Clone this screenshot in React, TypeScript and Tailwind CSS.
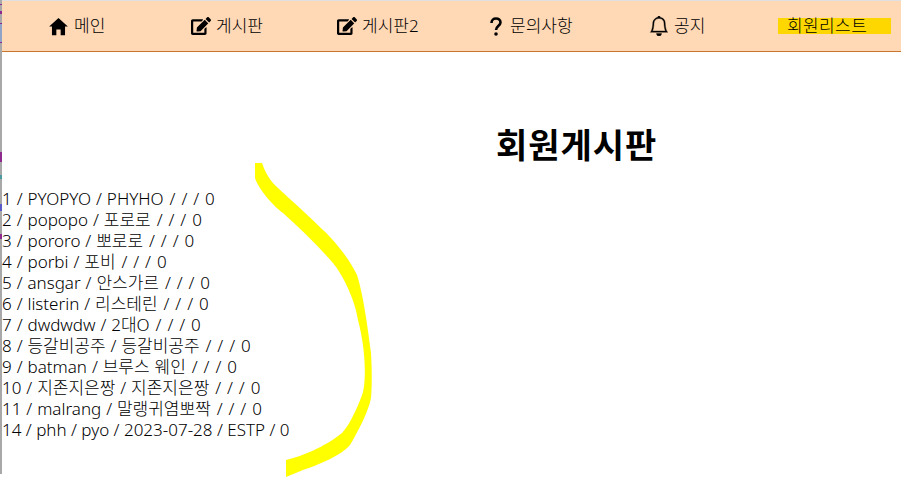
import { ReactNode } from 'react';
import { BsBell } from 'react-icons/bs';
import { FaEdit } from 'react-icons/fa';
import { IoMdHome } from 'react-icons/io';

const questionIcon = (
  <svg className="h-[19px] w-[12px] shrink-0" viewBox="0 0 12 19" fill="none">
    <path d="M1.5 6 C1.5 3 3.5 1.5 6 1.5 C8.5 1.5 10.5 3 10.5 5.5 C10.5 8.5 6 9 6 13" stroke="currentColor" strokeWidth="2.6" />
    <circle cx="6" cy="17" r="1.8" fill="currentColor" />
  </svg>
);

const menus: { label: string; icon: ReactNode; width: string; gap: string }[] = [
  { label: '메인', icon: <IoMdHome className="h-[23px] w-[23px] shrink-0 -mx-[2px]" />, width: 'w-[142px]', gap: 'gap-[6px]' },
  { label: '게시판', icon: <FaEdit className="h-[18px] w-[20px] shrink-0" />, width: 'w-[146px]', gap: 'gap-[5px]' },
  { label: '게시판2', icon: <FaEdit className="h-[18px] w-[20px] shrink-0" />, width: 'w-[153px]', gap: 'gap-[5px]' },
  { label: '문의사항', icon: questionIcon, width: 'w-[159px]', gap: 'gap-[8px]' },
  { label: '공지', icon: <BsBell className="h-[20px] w-[20px] shrink-0" stroke="currentColor" strokeWidth="0.3" />, width: 'w-[129px]', gap: 'gap-[5px]' },
];

// rows with empty birth/mbti columns render the trailing slashes a bit wider
const members = [
  { head: '1 / PYOPYO / PHYHO', tail: ' / / / 0' },
  { head: '2 / popopo / 포로로', tail: ' / / / 0' },
  { head: '3 / pororo / 뽀로로', tail: ' / / / 0' },
  { head: '4 / porbi / 포비', tail: ' / / / 0' },
  { head: '5 / ansgar / 안스가르', tail: ' / / / 0' },
  { head: '6 / listerin / 리스테린', tail: ' / / / 0' },
  { head: '7 / dwdwdw / 2대O', tail: ' / / / 0' },
  { head: '8 / 등갈비공주 / 등갈비공주', tail: ' / / / 0' },
  { head: '9 / batman / 브루스 웨인', tail: ' / / / 0' },
  { head: '10 / 지존지은짱 / 지존지은짱', tail: ' / / / 0' },
  { head: '11 / malrang / 말랭귀염뽀짝', tail: ' / / / 0' },
  { head: '14 / phh / pyo / 2023-07-28 / ESTP / 0', tail: '' },
];

export default function App() {
  return (
    <div className="relative h-[477px] w-[901px] overflow-hidden bg-white font-['Noto_Sans','Noto_Sans_CJK_KR',sans-serif] text-[17px] text-black">
      <div className="h-[1px] bg-[#e0e0e0]" />
      <nav className="ml-[2px] flex h-[51px] items-center border-b border-[#c87530] bg-[#ffd8b5] pl-[47px]">
        {menus.map((menu) => (
          <a key={menu.label} className={`flex items-center ${menu.gap} ${menu.width}`}>
            {menu.icon}
            <span className="font-light">{menu.label}</span>
          </a>
        ))}
        <a className="h-[16px] w-[113px] bg-[#ffd700] pl-[9px] leading-[16px] font-light tracking-[0.4px]">회원리스트</a>
      </nav>
      <h1 className="ml-[496px] mt-[70px] text-[34px] leading-[46px] font-bold tracking-[1px]">회원게시판</h1>
      <ul className="mt-[20px] pl-[2px] leading-[21px] font-light">
        {members.map((member) => (
          <li key={member.head} className={member.tail ? '[word-spacing:0.5px]' : ''}>
            {member.head}
            <span className="[word-spacing:1.5px]">{member.tail}</span>
          </li>
        ))}
      </ul>
      {/* marker stroke drawn over the list */}
      <svg className="absolute left-0 top-0" width="901" height="477" fill="#ffff00">
        <path d="M255 163 L262 163 C265 172 270 181 278 188 C290 199 310 217 323 230 C335 241 350 260 357 275 C362 290 367 320 371 353 C372 370 372 385 371 398 C369 410 358 432 350 445 C342 455 318 465 303 470 L286 477 L286 460 C300 457 325 447 342 433 C350 425 360 402 363 392 C366 380 366 350 358 320 C355 300 343 275 333 263 C322 250 300 228 283 213 C272 205 258 188 255 178 Z" />
      </svg>
      {/* window edge of whatever sat behind the browser */}
      <div className="absolute left-0 top-0 flex h-[474px] w-[2px] flex-col bg-[#a8a8a8]">
        <div className="mt-[4px] h-[1px] bg-[#8e2a8e]" />
        <div className="mt-[6px] h-[3px] bg-[#8e2a8e]" />
        <div className="mt-[9px] h-[1px] bg-[#8e2a8e]" />
        <div className="h-[18px] bg-[#8fa3c8]" />
        <div className="h-[1px] bg-[#8e2a8e]" />
        <div className="mt-[109px] h-[10px] bg-[#8e2a8e]" />
        <div className="mt-[13px] h-[4px] bg-[#4a9aa0]" />
        <div className="mt-[25px] h-[7px] bg-[#5a5ac8]" />
        <div className="mt-[23px] h-[5px] bg-[#8e2a8e]" />
      </div>
    </div>
  );
}
